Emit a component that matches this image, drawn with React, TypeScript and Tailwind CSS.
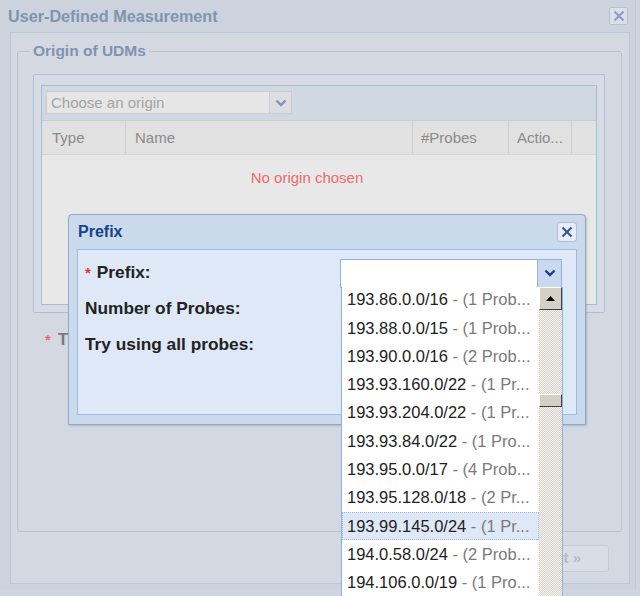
import React from 'react'

const prefixes: [string, string][] = [
  ['193.86.0.0/16', ' - (1 Prob...'],
  ['193.88.0.0/15', ' - (1 Prob...'],
  ['193.90.0.0/16', ' - (2 Prob...'],
  ['193.93.160.0/22', ' - (1 Pr...'],
  ['193.93.204.0/22', ' - (1 Pr...'],
  ['193.93.84.0/22', ' - (1 Pro...'],
  ['193.95.0.0/17', ' - (4 Prob...'],
  ['193.95.128.0/18', ' - (2 Pr...'],
  ['193.99.145.0/24', ' - (1 Pr...'],
  ['194.0.58.0/24', ' - (2 Prob...'],
  ['194.106.0.0/19', ' - (1 Pro...'],
]

function Chevron({ color }: { color: string }) {
  return (
    <svg width="12" height="8" viewBox="0 0 12 8">
      <path d="M1.5 1.5 L6 6 L10.5 1.5" fill="none" stroke={color} strokeWidth="2.4" />
    </svg>
  )
}

function CloseX({ color }: { color: string }) {
  return (
    <svg width="12" height="12" viewBox="0 0 12 12">
      <path d="M1.5 1.5 L10.5 10.5 M10.5 1.5 L1.5 10.5" fill="none" stroke={color} strokeWidth="2" />
    </svg>
  )
}

export default function App() {
  return (
    <div className="relative w-[640px] h-[596px] overflow-hidden bg-[#cfd5de] font-['Liberation_Sans',Arial,sans-serif]">
      {/* Masked background window */}
      <div className="w-[636px] h-[590px] bg-[#ccd3dc] border-r border-[#c3cad4]">
        <div className="h-[32px] flex items-center justify-between pl-[8px] pr-[7px]">
          <span className="text-[16.2px] font-bold text-[#7f93b3]">User-Defined Measurement</span>
          <div className="w-[19px] h-[18px] flex items-center justify-center rounded-[2px] border border-[#b6c2d4] bg-[#dbe1ea]">
            <CloseX color="#8b9bc0" />
          </div>
        </div>

        <div className="ml-[10px] w-[620px] h-[552px] border border-[#b9c7da] bg-[#d4d9e1] pl-[6px] pt-[9px] flex flex-col">
          <fieldset className="w-[605px] h-[490px] border border-[#bcc2cb] rounded-[3px] pl-[15px] pr-0">
            <legend className="-ml-[3px] px-[3px] text-[15.5px] leading-[18px] font-bold text-[#7f93b3]">Origin of UDMs</legend>

            {/* Grid panel */}
            <div className="mt-[14px] w-[572px] h-[239px] border border-[#adbed6] bg-[#d7dce4] rounded-[2px] pl-[7px] pt-[10px]">
              <div className="w-[556px] h-[220px] border border-[#a9bcd5] flex flex-col">
                <div className="h-[35px] bg-[#d0d8e2] border-b border-[#c2ccd8] pl-[4px] pt-[5px]">
                  <div className="flex h-[23px] w-[246px]">
                    <div className="w-[224px] border border-[#c9cdd3] bg-[#e6e6e6] pl-[4px] text-[15px] leading-[21px] text-[#a3a3a3]">
                      Choose an origin
                    </div>
                    <div className="w-[22px] border border-l-0 border-[#c9cdd3] bg-[#dcdee2] flex items-center justify-center">
                      <Chevron color="#8294b8" />
                    </div>
                  </div>
                </div>
                <div className="h-[34px] flex bg-[#e1e1e1] border-b border-[#d6d6d6] text-[15px] text-[#8a8a8a]">
                  <div className="w-[84px] pl-[10px] pt-[2px] flex items-center border-r border-[#d0d0d0]">Type</div>
                  <div className="w-[287px] pl-[9px] pt-[2px] flex items-center border-r border-[#d0d0d0]">Name</div>
                  <div className="w-[96px] pl-[8px] pt-[2px] flex items-center border-r border-[#d0d0d0]">#Probes</div>
                  <div className="w-[63px] pl-[8px] pt-[2px] flex items-center border-r border-[#d0d0d0]">Actio...</div>
                  <div className="flex-1" />
                </div>
                <div className="flex-1 bg-[#e8e8e8]">
                  <div className="w-[530px] pt-[12px] text-center text-[15px] text-[#ea6b6b]">No origin chosen</div>
                </div>
              </div>
            </div>

            <div className="mt-[17px] h-[20px] flex items-center pl-[12px] text-[17px] font-bold text-[#7a7a7a]">
              <span className="text-[#ef6a6a] text-[15px] mr-[7px]">*</span>
              <span className="inline-block w-[10px] overflow-hidden whitespace-nowrap">T</span>
            </div>
          </fieldset>

          <div className="mt-[13px] flex justify-end pr-[20px]">
            <div className="w-[80px] h-[27px] rounded-[3px] border border-[#c6ccd5] bg-[#d9dee6] flex items-center justify-end pr-[27px] text-[15px] font-bold text-[#b6bbc4]">
              Next »
            </div>
          </div>
        </div>
      </div>

      {/* Prefix window */}
      <div className="absolute left-[68px] top-[214px] w-[518px] h-[211px] rounded-t-[4px] border border-[#8fa9cd] bg-[#cbd9ec] shadow-[1px_1px_2px_rgba(0,0,0,0.15)] flex flex-col">
        <div className="h-[34px] flex items-center justify-between pl-[9px] pr-[8px]">
          <span className="text-[16px] font-bold text-[#15428b]">Prefix</span>
          <div className="w-[20px] h-[20px] flex items-center justify-center rounded-[3px] border border-[#a7bfe0] bg-[#e6edf8]">
            <CloseX color="#35508f" />
          </div>
        </div>
        <div className="mx-[8px] h-[166px] border border-[#99bbe8] bg-[#dfe8f6] pl-[7px] pt-[9px] flex flex-col gap-[7px] text-[17.3px] font-bold text-[#222]">
          <div className="h-[29px] flex items-center -mt-[1px]">
            <span className="w-[255px]">
              <span className="text-[#e8353a] text-[15px] mr-[6px]">*</span>Prefix:
            </span>
            <div className="flex h-[29px] w-[222px] mt-[1px]">
              <div className="w-[198px] border border-[#8eb3e0] bg-white" />
              <div className="w-[24px] border border-l-0 border-[#8eb3e0] bg-[#c9daf0] flex items-center justify-center">
                <Chevron color="#1d3e8a" />
              </div>
            </div>
          </div>
          <div className="h-[29px] flex items-center">Number of Probes:</div>
          <div className="h-[29px] flex items-center">Try using all probes:</div>
        </div>
      </div>

      {/* Prefix dropdown */}
      <div className="absolute left-[341px] top-[287px] w-[222px] h-[320px] bg-white border-x border-[#8db2e3] flex">
        <div className="w-[197px] -mt-[1.5px]">
          {prefixes.map(([ip, rest], i) => (
            <div
              key={ip}
              className={
                i === 8
                  ? 'h-[28.3px] flex items-center pl-[4px] text-[16.5px] whitespace-nowrap bg-[#dfe8f6] border border-dotted border-[#a3bae9]'
                  : 'h-[28.3px] flex items-center pl-[4px] text-[16.5px] whitespace-nowrap border border-transparent'
              }
            >
              <span className="text-[#222]">{ip}</span>
              <span className="text-[#7a7a7a] whitespace-pre">{rest}</span>
            </div>
          ))}
        </div>
        <div className="w-[23px] bg-[repeating-conic-gradient(#d9d5cd_0_25%,#f5f3ef_0_50%)] bg-[length:2px_2px] flex flex-col">
          <div className="h-[23px] bg-[#d4d0c8] border border-t-white border-l-white border-r-[#404040] border-b-[#404040] flex items-center justify-center">
            <svg width="9" height="5" viewBox="0 0 9 5">
              <path d="M4.5 0 L9 5 L0 5 Z" fill="#000" />
            </svg>
          </div>
          <div className="mt-[84px] h-[13px] bg-[#d4d0c8] border border-t-white border-l-white border-r-[#404040] border-b-[#404040]" />
        </div>
      </div>
    </div>
  )
}
